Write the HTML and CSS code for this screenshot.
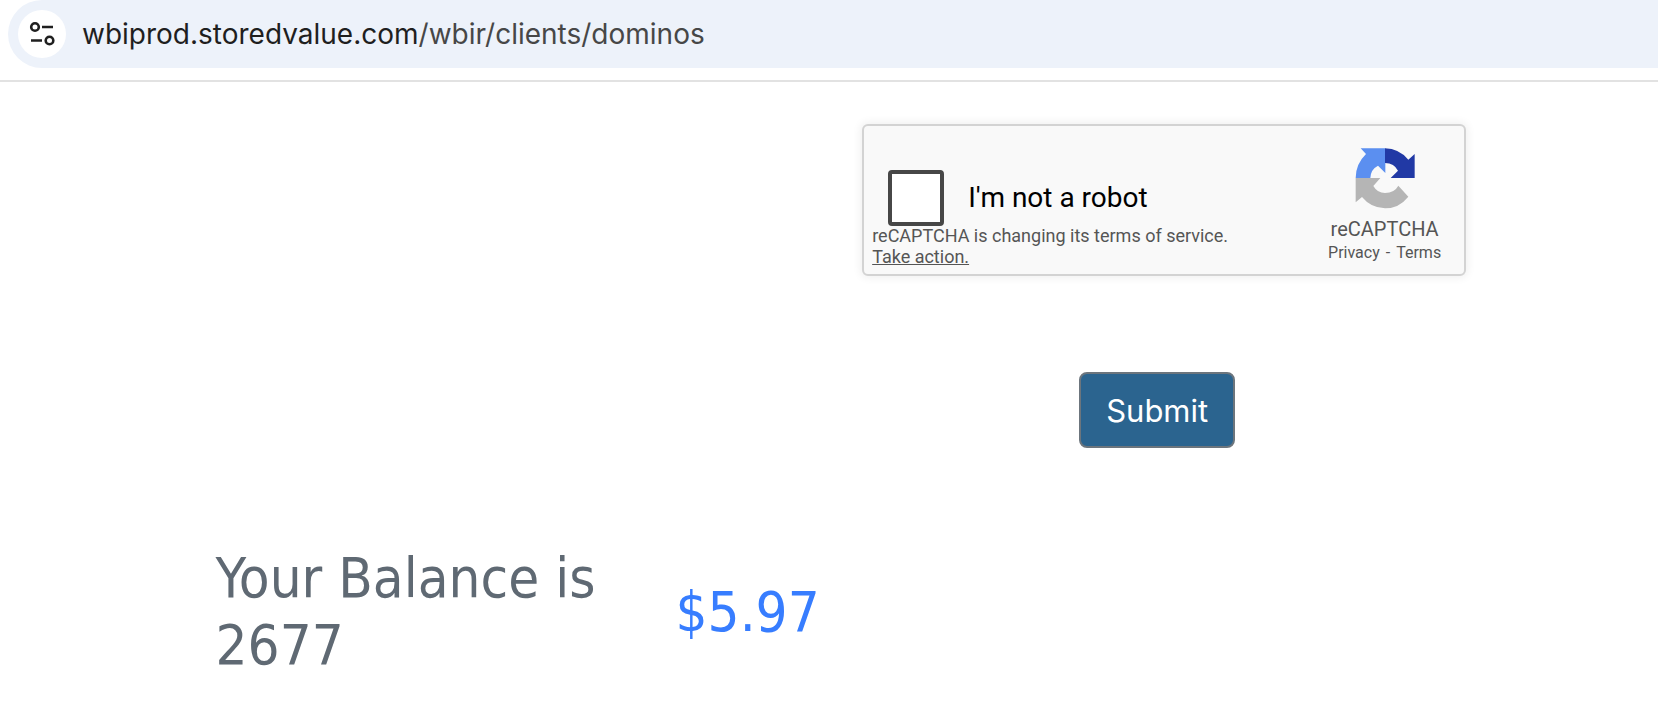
FILE: index.html
```
<!DOCTYPE html>
<html lang="en">
<head>
    <meta charset="UTF-8">
    <meta name="viewport" content="width=device-width, initial-scale=1.0">
    <title>Card Balance</title>
    <link rel="stylesheet" href="styles.css">
</head>
<body>

    <header class="toolbar">
        <div class="address-bar">
            <button type="button" class="site-info" aria-label="View site information">
                <svg width="26" height="26" viewBox="0 0 26 26" fill="none" stroke="#1f1f1f" stroke-width="2.6">
                    <circle cx="6" cy="6" r="3.8"/>
                    <path d="M13 6h11M2 19.5h11"/>
                    <circle cx="20.5" cy="19.5" r="3.8"/>
                </svg>
            </button>
            <div class="url">wbiprod.storedvalue.com<span class="path">/wbir/clients/dominos</span></div>
        </div>
    </header>

    <main>
        <form class="balance-form">
            <div class="captcha">
                <div class="captcha-main">
                    <div class="captcha-check">
                        <input type="checkbox" id="robot">
                        <label for="robot">I'm not a robot</label>
                    </div>
                    <p class="captcha-note">reCAPTCHA is changing its terms of service.<br><a href="#">Take action.</a></p>
                </div>
                <div class="captcha-brand">
                    <svg width="60" height="61" viewBox="0 0 180 183">
                        <path fill="#5b8ff0" d="M17 1H91V75L69 53Q47 64 46 90H2Q2 48 33 18Z"/>
                        <path fill="#2139a5" d="M90 1Q132 2 160 35L179 18V90H107L129 68Q118 46 90 45Z"/>
                        <path fill="#b5b5b5" d="M2 90H76L55 114Q67 135 90 135Q119 134 130 113L160 146Q132 181 90 181Q48 180 21 147L2 163Z"/>
                    </svg>
                    <div class="captcha-name">reCAPTCHA</div>
                    <div class="captcha-links"><a href="#">Privacy</a><span>-</span><a href="#">Terms</a></div>
                </div>
            </div>
            <button type="submit" class="submit">Submit</button>
        </form>

        <section class="balance">
            <div class="balance-label">Your Balance is 2677</div>
            <div class="balance-amount">$5.97</div>
        </section>
    </main>

</body>
</html>
```

FILE: styles.css
```
* {
    box-sizing: border-box;
}

body {
    margin: 0;
    background-color: #fff;
    font-family: Roboto, Arial, sans-serif;
}

.toolbar {
    padding: 0 0 12px 8px;
    border-bottom: 2px solid #e2e2e2;
}

.address-bar {
    display: flex;
    align-items: center;
    gap: 16px;
    height: 68px;
    padding-left: 10px;
    background-color: #edf2fa;
    border-radius: 34px 0 0 34px;
}

.site-info {
    display: flex;
    align-items: center;
    justify-content: center;
    width: 48px;
    height: 48px;
    padding: 0;
    border: none;
    border-radius: 50%;
    background-color: #fff;
}

.url {
    font-family: Inter, sans-serif;
    font-size: 28px;
    color: #1f1f1f;
}

.url .path {
    color: #474747;
}

.balance-form {
    display: flex;
    flex-direction: column;
    align-items: flex-start;
    gap: 96px;
    margin-left: 52%;
    padding-top: 42px;
}

.captcha {
    display: flex;
    justify-content: space-between;
    width: 604px;
    height: 152px;
    padding: 0 23px 0 8px;
    border: 2px solid #d3d3d3;
    border-radius: 6px;
    background-color: #f9f9f9;
    box-shadow: 0 0 8px 2px rgba(0,0,0,0.06);
}

.captcha-check {
    display: flex;
    align-items: center;
    gap: 24px;
    height: 99px;
    padding: 44px 0 0 16px;
}

.captcha-check input {
    appearance: none;
    flex: none;
    width: 56px;
    height: 56px;
    margin: 0;
    border: 4px solid #474747;
    border-radius: 4px;
    background-color: #fff;
}

.captcha-check label {
    font-size: 28px;
    color: #000;
}

.captcha-note {
    margin: 0;
    font-size: 18px;
    line-height: 21px;
    color: #555;
}

.captcha-note a {
    color: inherit;
}

.captcha-brand {
    padding-top: 22px;
    text-align: center;
    color: #555;
}

.captcha-brand svg {
    display: block;
    margin: 0 auto;
}

.captcha-name {
    padding-top: 8px;
    font-size: 20px;
    line-height: 24px;
}

.captcha-links {
    display: flex;
    justify-content: center;
    gap: 6px;
    font-size: 16px;
    line-height: 24px;
}

.captcha-links a {
    color: inherit;
    text-decoration: none;
}

.submit {
    height: 76px;
    margin-left: 217px;
    padding: 0 25px;
    border: 2px solid #6c757d;
    border-radius: 8px;
    background-color: #2b648f;
    color: #fff;
    font-family: Inter, sans-serif;
    font-size: 31px;
}

.balance {
    display: grid;
    grid-template-columns: 436px auto;
    column-gap: 24px;
    align-items: center;
    justify-content: start;
    padding: 96px 0 40px 13%;
    font-family: "DejaVu Sans Condensed", Tahoma, sans-serif;
    font-size: 56px;
    line-height: 67px;
}

.balance-label {
    color: #5f6973;
}

.balance-amount {
    color: #377dff;
}
```
